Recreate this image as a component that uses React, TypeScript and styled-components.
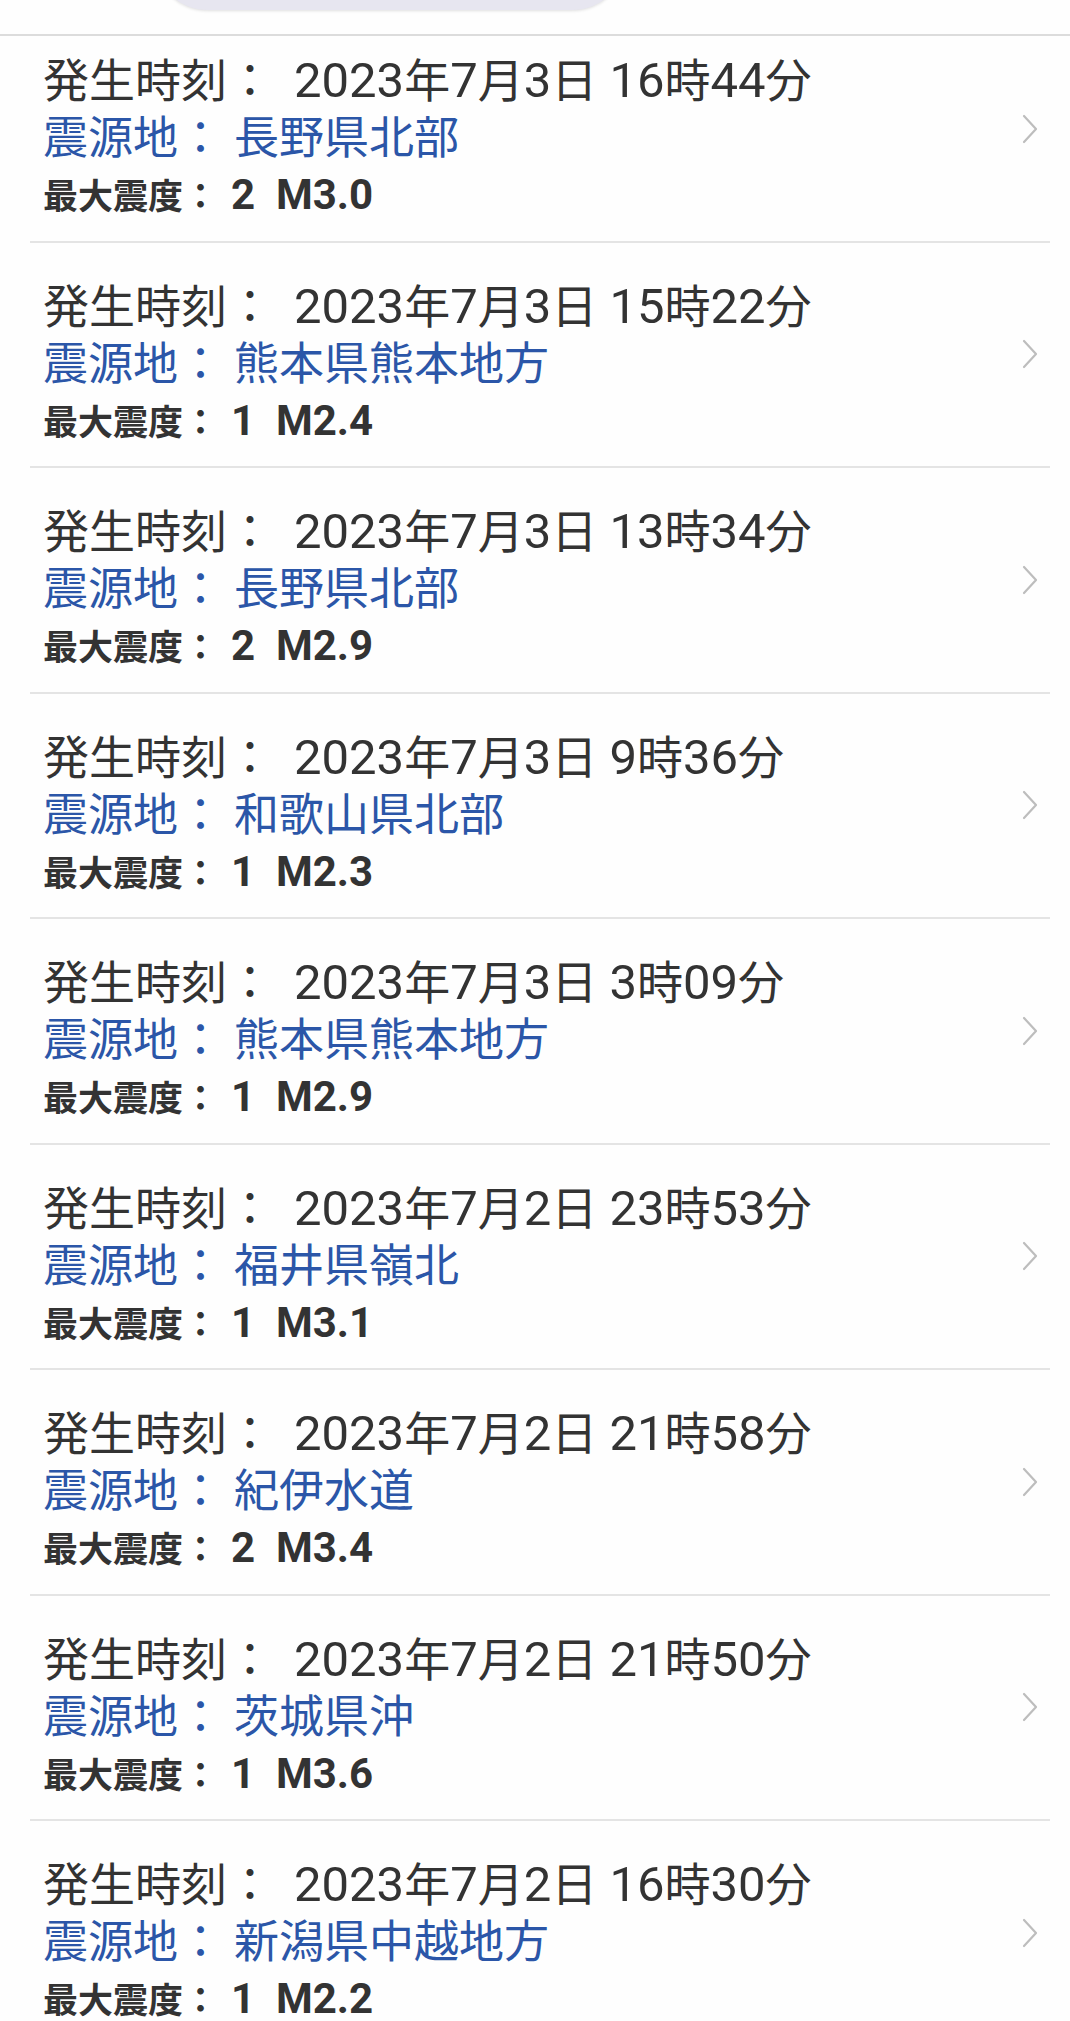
import styled, { createGlobalStyle } from 'styled-components';

const GlobalStyle = createGlobalStyle`
  html, body {
    margin: 0;
    padding: 0;
    background: #fefefe;
  }
  body {
    font-family: Roboto, "Noto Sans CJK JP", sans-serif;
    color: #333333;
  }
`;

const Page = styled.div`
  width: 1070px;
  min-height: 2021px;
  overflow: hidden;
  background: #fefefe;
`;

// the page is scrolled: the header sits over the first row
const Header = styled.header`
  position: relative;
  z-index: 1;
  height: 34px;
  background: #fefefe;
  border-bottom: 2px solid #dcdcdc;
  overflow: hidden;
`;

const Pill = styled.div`
  width: 470px;
  height: 104px;
  margin: -94px 0 0 155px;
  border-radius: 52px;
  background: #e7e6f0;
  box-shadow: 0 1px 3px rgba(0, 0, 0, 0.12);
`;

const List = styled.ul`
  list-style: none;
  margin: -19px 0 0;
  padding: 0;
`;

const Row = styled.li`
  display: flex;
  align-items: center;
  margin: 0 20px 0 30px;
  padding: 0 12px 0 13px;
  border-bottom: 2px solid #e4e4e4;
`;

const Info = styled.div`
  flex: 1;
  padding: 33px 0 17.5px;
`;

const Line = styled.div<{ $size: number; $height: number; $color?: string; $bold?: boolean }>`
  height: ${(p) => p.$height}px;
  line-height: ${(p) => p.$height}px;
  font-size: ${(p) => p.$size}px;
  font-weight: ${(p) => (p.$bold ? 700 : 400)};
  color: ${(p) => p.$color ?? '#333333'};
  white-space: pre;
`;

const Value = styled.span<{ $gap: number }>`
  margin-left: ${(p) => p.$gap}px;
`;

const Latin = styled.span<{ $size: number }>`
  font-size: ${(p) => p.$size}px;
`;

const Chevron = () => (
  <svg width="16" height="30" viewBox="0 0 16 30" fill="none">
    <path d="M2 2 L14 15 L2 28" stroke="#bdbdbd" strokeWidth="2.2" strokeLinecap="round" strokeLinejoin="round" />
  </svg>
);

// digits render a little larger than the kana/kanji next to them
const mixed = (text: string, size: number) =>
  text.split(/([0-9A-Za-z. ]+)/).map((part, i) =>
    /[0-9A-Za-z]/.test(part) ? (
      <Latin key={i} $size={size}>
        {part}
      </Latin>
    ) : (
      part
    ),
  );

type Quake = { time: string; place: string; shindo: string; mag: string };

const quakes: Quake[] = [
  { time: '2023年7月3日 16時44分', place: '長野県北部', shindo: '2', mag: 'M3.0' },
  { time: '2023年7月3日 15時22分', place: '熊本県熊本地方', shindo: '1', mag: 'M2.4' },
  { time: '2023年7月3日 13時34分', place: '長野県北部', shindo: '2', mag: 'M2.9' },
  { time: '2023年7月3日 9時36分', place: '和歌山県北部', shindo: '1', mag: 'M2.3' },
  { time: '2023年7月3日 3時09分', place: '熊本県熊本地方', shindo: '1', mag: 'M2.9' },
  { time: '2023年7月2日 23時53分', place: '福井県嶺北', shindo: '1', mag: 'M3.1' },
  { time: '2023年7月2日 21時58分', place: '紀伊水道', shindo: '2', mag: 'M3.4' },
  { time: '2023年7月2日 21時50分', place: '茨城県沖', shindo: '1', mag: 'M3.6' },
  { time: '2023年7月2日 16時30分', place: '新潟県中越地方', shindo: '1', mag: 'M2.2' },
];

const App = () => {
  return (
    <Page>
      <GlobalStyle />
      <Header>
        <Pill />
      </Header>
      <List>
        {quakes.map((q, i) => (
          <Row key={i}>
            <Info>
              <Line $size={46} $height={61}>
                発生時刻：<Value $gap={21}>{mixed(q.time, 49)}</Value>
              </Line>
              <Line $size={45} $height={55} $color="#2b56a8">
                震源地：<Value $gap={11}>{q.place}</Value>
              </Line>
              <Line $size={35} $height={57} $bold>
                最大震度：<Value $gap={13}>{mixed(`${q.shindo}  ${q.mag}`, 42)}</Value>
              </Line>
            </Info>
            <Chevron />
          </Row>
        ))}
      </List>
    </Page>
  );
};

export default App;
